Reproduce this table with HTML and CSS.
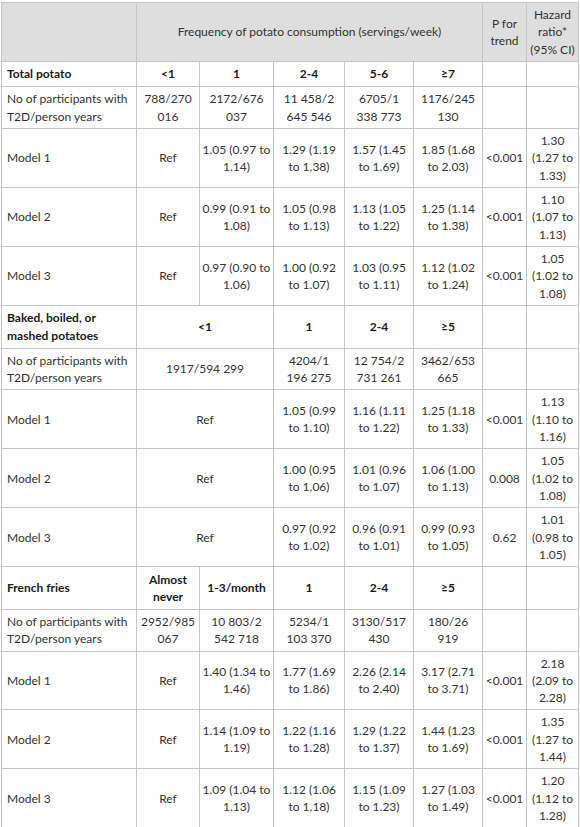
FILE: index.html
```html
<!DOCTYPE html>
<html lang="en">
<head>
<meta charset="utf-8">
<title>Potato consumption and T2D</title>
<link rel="stylesheet" href="styles.css">
</head>
<body>
<table class="data">
  <colgroup>
    <col class="c-label">
    <col class="c-a">
    <col class="c-b">
    <col class="c-c">
    <col class="c-d">
    <col class="c-e">
    <col class="c-p">
    <col class="c-hr">
  </colgroup>
  <thead>
    <tr class="head">
      <th class="blank"></th>
      <th colspan="5">Frequency of potato consumption (servings/week)</th>
      <th>P for<br>trend</th>
      <th>Hazard<br>ratio*<br>(95% CI)</th>
    </tr>
  </thead>
  <tbody>
    <tr class="sec">
      <th class="lbl">Total potato</th>
      <th>&lt;1</th><th>1</th><th>2-4</th><th>5-6</th><th>≥7</th><td></td><td></td>
    </tr>
    <tr>
      <td class="lbl">No of participants with<br>T2D/person years</td>
      <td>788/270<br>016</td><td>2172/676<br>037</td><td>11 458/2<br>645 546</td><td>6705/1<br>338 773</td><td>1176/245<br>130</td><td></td><td></td>
    </tr>
    <tr>
      <td class="lbl">Model 1</td>
      <td>Ref</td><td>1.05 (0.97 to<br>1.14)</td><td>1.29 (1.19<br>to 1.38)</td><td>1.57 (1.45<br>to 1.69)</td><td>1.85 (1.68<br>to 2.03)</td><td>&lt;0.001</td><td>1.30<br>(1.27 to<br>1.33)</td>
    </tr>
    <tr>
      <td class="lbl">Model 2</td>
      <td>Ref</td><td>0.99 (0.91 to<br>1.08)</td><td>1.05 (0.98<br>to 1.13)</td><td>1.13 (1.05<br>to 1.22)</td><td>1.25 (1.14<br>to 1.38)</td><td>&lt;0.001</td><td>1.10<br>(1.07 to<br>1.13)</td>
    </tr>
    <tr>
      <td class="lbl">Model 3</td>
      <td>Ref</td><td>0.97 (0.90 to<br>1.06)</td><td>1.00 (0.92<br>to 1.07)</td><td>1.03 (0.95<br>to 1.11)</td><td>1.12 (1.02<br>to 1.24)</td><td>&lt;0.001</td><td>1.05<br>(1.02 to<br>1.08)</td>
    </tr>

    <tr class="sec">
      <th class="lbl">Baked, boiled, or<br>mashed potatoes</th>
      <th colspan="2">&lt;1</th><th>1</th><th>2-4</th><th>≥5</th><td></td><td></td>
    </tr>
    <tr>
      <td class="lbl">No of participants with<br>T2D/person years</td>
      <td colspan="2">1917/594 299</td><td>4204/1<br>196 275</td><td>12 754/2<br>731 261</td><td>3462/653<br>665</td><td></td><td></td>
    </tr>
    <tr>
      <td class="lbl">Model 1</td>
      <td colspan="2">Ref</td><td>1.05 (0.99<br>to 1.10)</td><td>1.16 (1.11<br>to 1.22)</td><td>1.25 (1.18<br>to 1.33)</td><td>&lt;0.001</td><td>1.13<br>(1.10 to<br>1.16)</td>
    </tr>
    <tr>
      <td class="lbl">Model 2</td>
      <td colspan="2">Ref</td><td>1.00 (0.95<br>to 1.06)</td><td>1.01 (0.96<br>to 1.07)</td><td>1.06 (1.00<br>to 1.13)</td><td>0.008</td><td>1.05<br>(1.02 to<br>1.08)</td>
    </tr>
    <tr>
      <td class="lbl">Model 3</td>
      <td colspan="2">Ref</td><td>0.97 (0.92<br>to 1.02)</td><td>0.96 (0.91<br>to 1.01)</td><td>0.99 (0.93<br>to 1.05)</td><td>0.62</td><td>1.01<br>(0.98 to<br>1.05)</td>
    </tr>

    <tr class="sec">
      <th class="lbl">French fries</th>
      <th>Almost<br>never</th><th>1-3/month</th><th>1</th><th>2-4</th><th>≥5</th><td></td><td></td>
    </tr>
    <tr>
      <td class="lbl">No of participants with<br>T2D/person years</td>
      <td>2952/985<br>067</td><td>10 803/2<br>542 718</td><td>5234/1<br>103 370</td><td>3130/517<br>430</td><td>180/26<br>919</td><td></td><td></td>
    </tr>
    <tr>
      <td class="lbl">Model 1</td>
      <td>Ref</td><td>1.40 (1.34 to<br>1.46)</td><td>1.77 (1.69<br>to 1.86)</td><td>2.26 (2.14<br>to 2.40)</td><td>3.17 (2.71<br>to 3.71)</td><td>&lt;0.001</td><td>2.18<br>(2.09 to<br>2.28)</td>
    </tr>
    <tr>
      <td class="lbl">Model 2</td>
      <td>Ref</td><td>1.14 (1.09 to<br>1.19)</td><td>1.22 (1.16<br>to 1.28)</td><td>1.29 (1.22<br>to 1.37)</td><td>1.44 (1.23<br>to 1.69)</td><td>&lt;0.001</td><td>1.35<br>(1.27 to<br>1.44)</td>
    </tr>
    <tr>
      <td class="lbl">Model 3</td>
      <td>Ref</td><td>1.09 (1.04 to<br>1.13)</td><td>1.12 (1.06<br>to 1.18)</td><td>1.15 (1.09<br>to 1.23)</td><td>1.27 (1.03<br>to 1.49)</td><td>&lt;0.001</td><td>1.20<br>(1.12 to<br>1.28)</td>
    </tr>
  </tbody>
</table>
</body>
</html>
```

FILE: styles.css
```css
html, body {
  background: #ffffff;
}

body {
  margin: 2px 0 0 1px;
  font-family: Lato, "Liberation Sans", sans-serif;
  font-size: 12px;
  line-height: 17.33px;
  color: #333333;
}

.data {
  border-collapse: collapse;
  table-layout: fixed;
  width: 578px;
}

.c-label { width: 135px; }
.c-a { width: 63px; }
.c-b { width: 74px; }
.c-c { width: 71px; }
.c-d { width: 69px; }
.c-e { width: 69px; }
.c-p { width: 44px; }
.c-hr { width: 52px; }

.data th,
.data td {
  border: 1px solid #c6c6c6;
  padding: 3px 2px;
  text-align: center;
  vertical-align: middle;
  white-space: nowrap;
}

.data thead th {
  background: #dedede;
  font-weight: normal;
  color: #333333;
}

.data tbody th {
  font-weight: 700;
  color: #1a1a1a;
}

.data tbody .sec th {
  padding-top: 3.5px;
  padding-bottom: 3.5px;
}

.data .lbl {
  text-align: left;
  padding-left: 5px;
}
```
